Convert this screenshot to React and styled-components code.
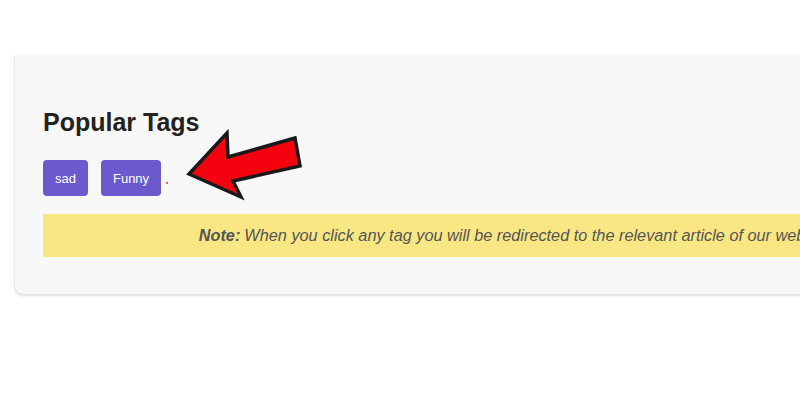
import React from 'react';
import styled, { createGlobalStyle } from 'styled-components';

const GlobalStyle = createGlobalStyle`
  html, body {
    margin: 0;
    padding: 0;
    background: #ffffff;
    overflow: hidden;
  }
  body {
    font-family: "Liberation Sans", Arial, sans-serif;
  }
`;

const Page = styled.div`
  position: relative;
  width: 800px;
  height: 400px;
  overflow: hidden;
  padding-top: 55px;
  padding-left: 15px;
  box-sizing: border-box;
`;

const Card = styled.section`
  width: 1004px;
  box-sizing: border-box;
  background: #f8f8f8;
  border-radius: 0 0 8px 8px;
  box-shadow: 0 2px 3px rgba(0, 0, 0, 0.12), -1px 0 2px rgba(0, 0, 0, 0.06);
  padding: 53px 28px 37px;
`;

const Title = styled.h2`
  margin: 0 0 23px;
  font-size: 25px;
  font-weight: 700;
  line-height: 29px;
  color: #222222;
`;

const TagRow = styled.div`
  display: flex;
  align-items: center;
  gap: 13px;
  margin-bottom: 18px;
`;

const Tag = styled.a`
  display: inline-flex;
  align-items: center;
  height: 36px;
  padding: 0 12px;
  border-radius: 4px;
  background: #6a5acd;
  color: #ffffff;
  font-size: 13px;
  text-decoration: none;
`;

const Dot = styled.span`
  width: 2px;
  height: 2px;
  margin: 10px 0 0 -8px;
  background: #e53935;
  border-radius: 50%;
`;

const Note = styled.p`
  margin: 0;
  height: 43px;
  display: flex;
  align-items: center;
  justify-content: center;
  background: #f9e784;
  color: #555555;
  font-size: 16.3px;
  font-style: italic;
  white-space: nowrap;

  b {
    font-weight: 700;
    margin-right: 4px;
  }
`;

const Arrow = styled.svg`
  position: absolute;
  left: 0;
  top: 0;
  pointer-events: none;
`;

export default function App() {
  return (
    <>
      <GlobalStyle />
      <Page>
        <Card>
          <Title>Popular Tags</Title>
          <TagRow>
            <Tag href="#">sad</Tag>
            <Tag href="#">Funny</Tag>
            <Dot />
          </TagRow>
          <Note>
            <b>Note:</b> When you click any tag you will be redirected to the relevant article of our website.
          </Note>
        </Card>
        <Arrow width="800" height="400" viewBox="0 0 800 400">
          <polygon
            points="189,174 227,133 228,157 295,138 300,166 233,181 241,197"
            fill="#f5000f"
            stroke="#1a1a1a"
            strokeWidth="3.5"
            strokeLinejoin="miter"
          />
        </Arrow>
      </Page>
    </>
  );
}
